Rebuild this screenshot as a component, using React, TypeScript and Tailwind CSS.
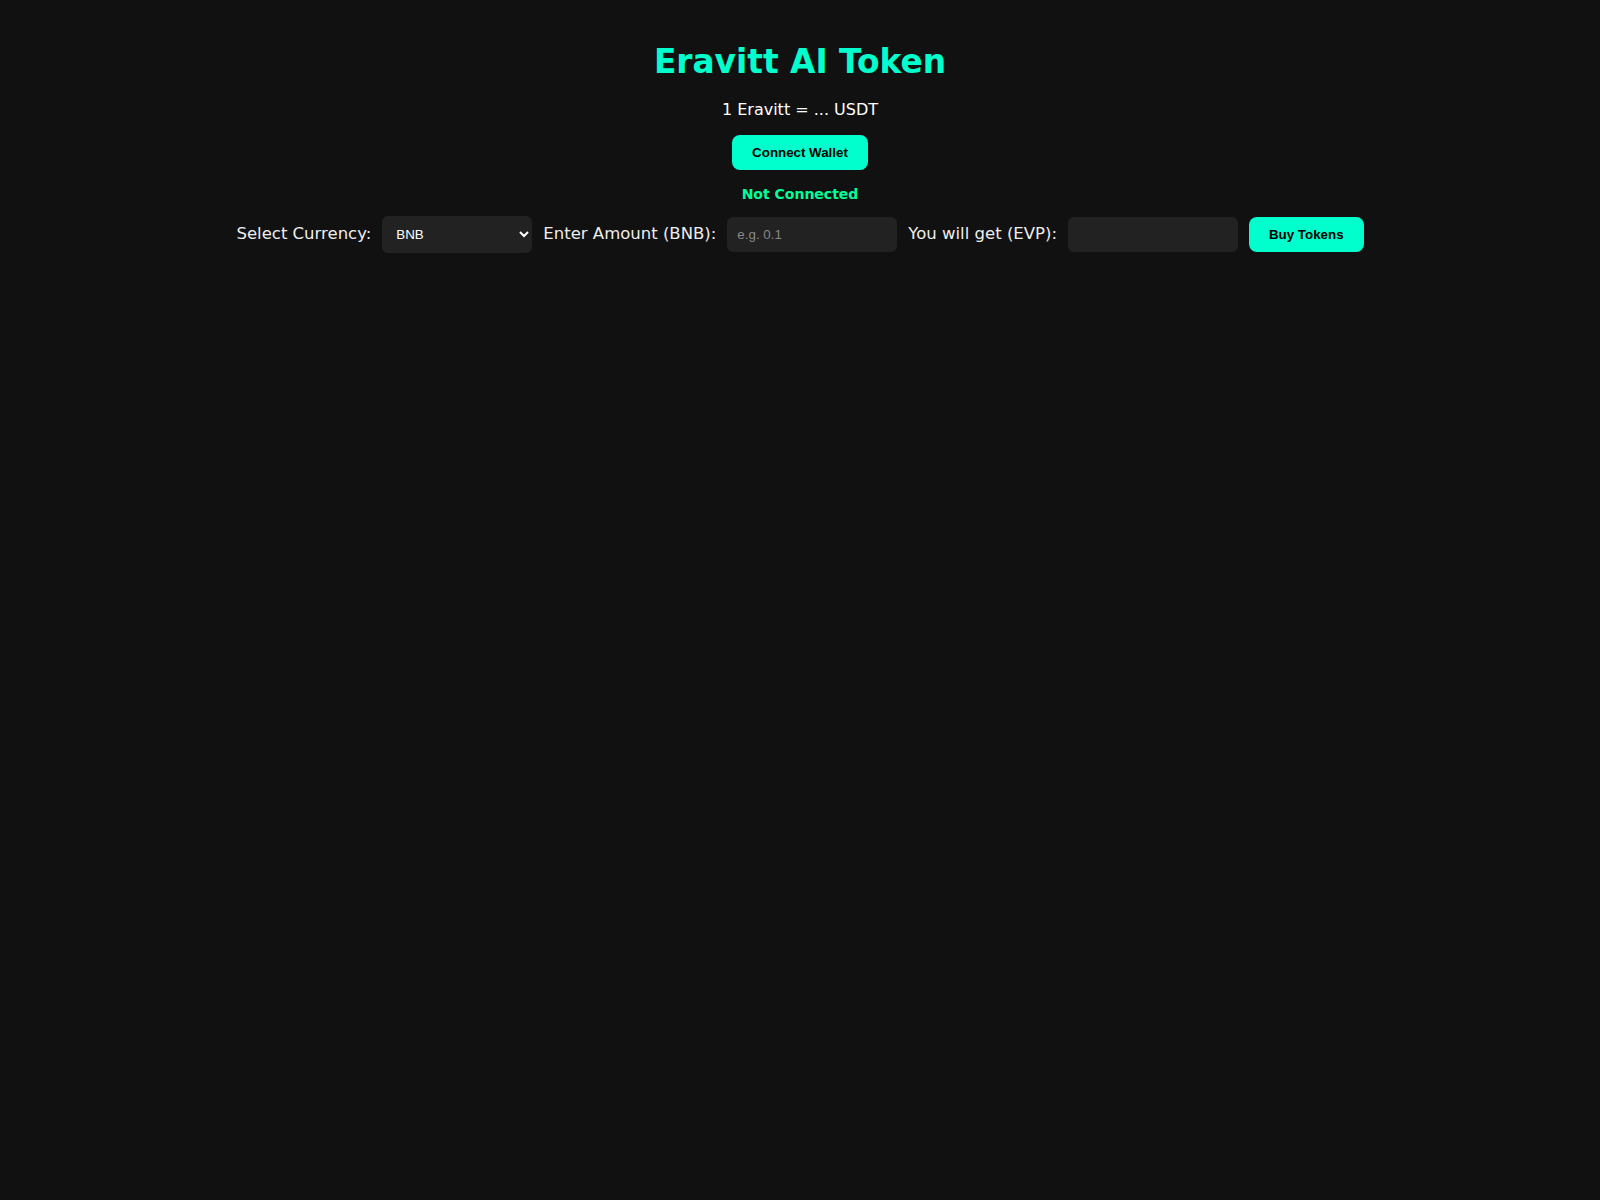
export default function App() {
  return (
    <main className="min-h-screen bg-[#111111] pt-[22px] text-center text-[#eeeeee] font-['DejaVu_Sans',Verdana,sans-serif]">
      <h1 className="mt-[21.4px] mb-[19.4px] text-[32.8px] font-bold leading-[1.164] text-[#00ffcc]">Eravitt AI Token</h1>
      <p className="mb-[15px] text-[16px] leading-[1.164] text-white">1 Eravitt = ... USDT</p>
      <button className="rounded-lg bg-[#00ffcc] px-5 py-[10px] text-[13.33px] leading-[1.15] font-bold text-black font-['Liberation_Sans',Arial,sans-serif]">
        Connect Wallet
      </button>
      <p className="mt-[16px] mb-[14px] text-[14px] font-bold leading-[1.164] text-[#00ff99]">Not Connected</p>
      <div className="flex items-center justify-center gap-[11px]">
        <label className="text-[16.5px]">Select Currency:</label>
        <select className="h-[37px] w-[150px] rounded-md bg-[#222222] px-[10px] text-[13.33px] text-white font-['Liberation_Sans',Arial,sans-serif]">
          <option>BNB</option>
          <option>USDT</option>
        </select>
        <label className="text-[16.5px]">Enter Amount (BNB):</label>
        <input
          placeholder="e.g. 0.1"
          className="h-[35px] w-[170px] rounded-md bg-[#222222] px-[10px] text-[13.33px] text-white placeholder:text-[#888888] outline-none font-['Liberation_Sans',Arial,sans-serif]"
        />
        <label className="text-[16.5px]">You will get (EVP):</label>
        <input readOnly className="h-[35px] w-[170px] rounded-md bg-[#222222] px-[10px] text-[13.33px] text-white outline-none" />
        <button className="h-[35px] rounded-lg bg-[#00ffcc] px-5 text-[13.33px] font-bold text-black font-['Liberation_Sans',Arial,sans-serif]">
          Buy Tokens
        </button>
      </div>
    </main>
  );
}
